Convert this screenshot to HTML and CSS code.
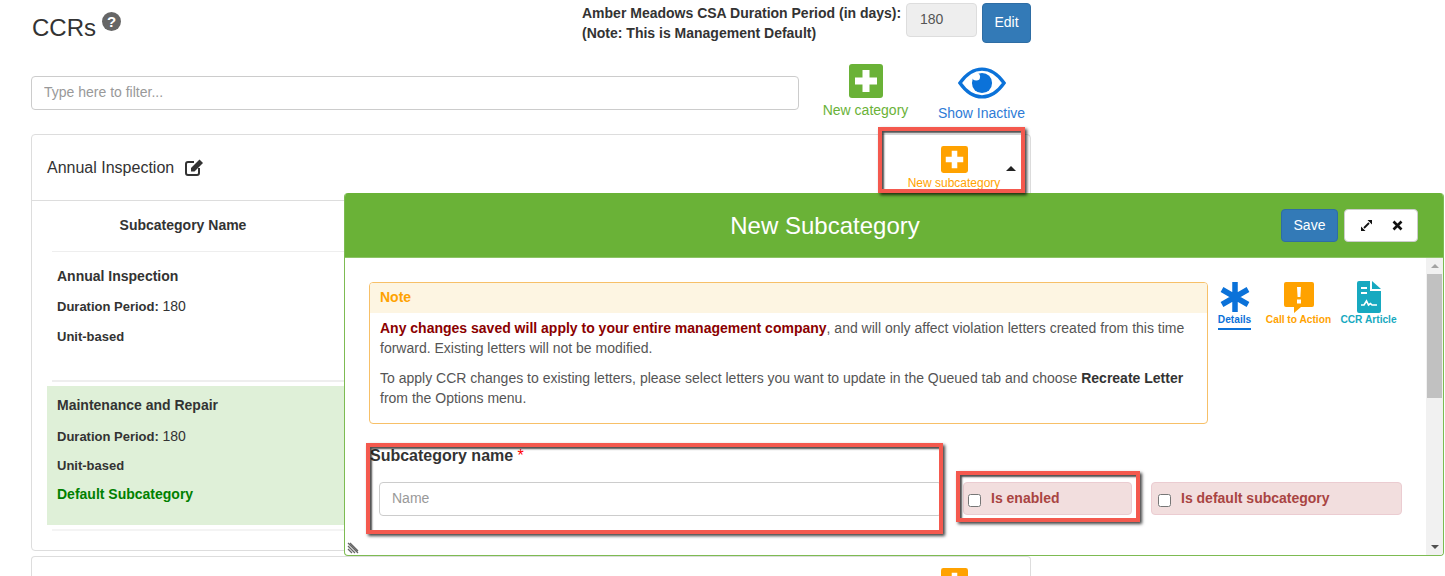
FILE: index.html
```html
<!DOCTYPE html>
<html>
<head>
    <title>CCRs</title>
    <link rel="stylesheet" href="styles.css">
</head>
<body>
    <div class="page">
        <div class="topRow">
            <div class="titleWrap">
                <h1>CCRs</h1>
                <span class="helpIcon">?</span>
            </div>
            <div class="duration">
                <div class="durationText">Amber Meadows CSA Duration Period (in days):<br>(Note: This is Management Default)</div>
                <input type="text" class="durationInput" value="180" disabled>
                <button class="btnBlue editBtn">Edit</button>
            </div>
        </div>

        <div class="filterRow">
            <input type="text" class="input filterInput" placeholder="Type here to filter...">
            <div class="action newCategory">
                <svg width="34" height="34" viewBox="0 0 34 34"><rect width="34" height="34" rx="3" fill="#6ab237"/><path d="M13.5 6h7v7.500h7.500v7h-7.500v7.500h-7v-7.500h-7.500v-7h7.500z" fill="#fff"/></svg>
                <span>New category</span>
            </div>
            <div class="action showInactive">
                <svg width="48" height="34" viewBox="0 0 50 34"><path d="M2 17C9 7 16 2.500 25 2.500S41 7 48 17C41 27 34 31.500 25 31.500S9 27 2 17z" fill="#fff" stroke="#0b72d9" stroke-width="3.500"/><circle cx="25" cy="17" r="10.500" fill="#0b72d9"/><circle cx="19" cy="10.500" r="4" fill="#fff"/></svg>
                <span>Show Inactive</span>
            </div>
        </div>

        <div class="panel">
            <div class="panelHead">
                <div class="panelTitle">
                    Annual Inspection
                    <svg class="editIcon" width="19" height="17" viewBox="0 0 19 17"><path d="M9 3H3a2 2 0 0 0-2 2v9a2 2 0 0 0 2 2h9a2 2 0 0 0 2-2V9" fill="none" stroke="#333" stroke-width="2"/><path d="M6 9l8.500-8.500 3.500 3.500-8.500 8.500H6z" fill="#333"/></svg>
                </div>
                <div class="action newSub">
                    <svg width="27" height="27" viewBox="0 0 34 34"><rect width="34" height="34" rx="3" fill="#ffa200"/><path d="M13.500 6h7v7.500h7.500v7h-7.500v7.500h-7v-7.500h-7.500v-7h7.500z" fill="#fff"/></svg>
                    <span>New subcategory</span>
                </div>
                <span class="caretUp"></span>
            </div>
            <div class="panelBody">
                <div class="tableHead"><span>Subcategory Name</span></div>
                <div class="sub">
                    <p class="subName">Annual Inspection</p>
                    <p><b>Duration Period:</b> <span class="num">180</span></p>
                    <p><b>Unit-based</b></p>
                </div>
                <div class="sub subDefault">
                    <p class="subName">Maintenance and Repair</p>
                    <p><b>Duration Period:</b> <span class="num">180</span></p>
                    <p><b>Unit-based</b></p>
                    <p class="defaultTag">Default Subcategory</p>
                </div>
                <div class="subEnd"></div>
            </div>
        </div>

        <div class="panel nextPanel">
            <div class="panelHead">
                <div class="action newSub">
                    <svg width="27" height="27" viewBox="0 0 34 34"><rect width="34" height="34" rx="3" fill="#ffa200"/><path d="M13.500 6h7v7.500h7.500v7h-7.500v7.500h-7v-7.500h-7.500v-7h7.500z" fill="#fff"/></svg>
                </div>
            </div>
        </div>
    </div>

    <div class="modal">
        <div class="modalHead">
            <h2>New Subcategory</h2>
            <button class="btnBlue saveBtn">Save</button>
            <div class="modalTools">
                <svg width="13" height="13" viewBox="0 0 13 13"><path d="M7.500 1H12v4.500zM5.500 12H1V7.500z" fill="#111"/><path d="M9 4L4 9" stroke="#111" stroke-width="1.800"/></svg>
                <svg width="11" height="11" viewBox="0 0 11 11"><path d="M1.500 1.500l8 8M9.500 1.500l-8 8" stroke="#111" stroke-width="2.600"/></svg>
            </div>
        </div>
        <div class="modalMain">
            <div class="modalBody">
                <div class="noteRow">
                    <div class="note">
                        <div class="noteHead">Note</div>
                        <div class="noteText">
                            <p><b class="warn">Any changes saved will apply to your entire management company</b>, and will only affect violation letters created from this time forward. Existing letters will not be modified.</p>
                            <p>To apply CCR changes to existing letters, please select letters you want to update in the Queued tab and choose <b>Recreate Letter</b> from the Options menu.</p>
                        </div>
                    </div>
                    <div class="tabs">
                        <div class="tab tabDetails">
                            <svg width="30" height="32" viewBox="0 0 30 32"><path d="M15 1v30M2 8.500l26 15M28 8.500l-26 15" stroke="#0b72d9" stroke-width="5.500"/></svg>
                            <span>Details</span>
                        </div>
                        <div class="tab tabAction">
                            <svg width="32" height="32" viewBox="0 0 32 32"><path d="M3 1h26a2 2 0 0 1 2 2v21a2 2 0 0 1-2 2H18l-7 6v-6H3a2 2 0 0 1-2-2V3a2 2 0 0 1 2-2z" fill="#ffa200"/><path d="M14 6h4l-.6 10h-2.800zM14 18.500h4v4h-4z" fill="#fff"/></svg>
                            <span>Call to Action</span>
                        </div>
                        <div class="tab tabArticle">
                            <svg width="24" height="32" viewBox="0 0 24 32"><path d="M2 0h11v10h11v20a2 2 0 0 1-2 2H2a2 2 0 0 1-2-2V2a2 2 0 0 1 2-2zM15 0l9 8h-9z" fill="#17a9c0"/><path d="M4 6h6v2H4zM4 11h6v2H4z" fill="#fff"/><path d="M4 24h3l2.500-4 2 4 2-1.500 1.500 1.500h5" fill="none" stroke="#fff" stroke-width="1.600"/></svg>
                            <span>CCR Article</span>
                        </div>
                    </div>
                </div>
                <div class="formRow">
                    <div class="nameCol">
                        <label class="nameLabel">Subcategory name <span class="req">*</span></label>
                        <input type="text" class="input nameInput" placeholder="Name">
                    </div>
                    <label class="checkBox enabledBox"><input type="checkbox"><span>Is enabled</span></label>
                    <label class="checkBox defaultBox"><input type="checkbox"><span>Is default subcategory</span></label>
                </div>
            </div>
            <div class="scrollBar">
                <span class="arrow arrowUp"></span>
                <div class="scrollThumb"></div>
                <span class="arrow arrowDown"></span>
            </div>
        </div>
        <svg class="resizer" width="12" height="12" viewBox="0 0 12 12"><path d="M1 1l10 10M1 4l7 7M1 7l4 4M3 1l8 8" stroke="#666" stroke-width="1.300"/></svg>
    </div>

    <div class="mark markSub"></div>
    <div class="mark markName"></div>
    <div class="mark markEnabled"></div>
</body>
</html>
```

FILE: styles.css
```css
html, body {
    height: 576px;
    overflow: hidden;
}

body {
    margin: 0;
    position: relative;
    background-color: white;
    color: #333;
    font-family: "Liberation Sans", Arial, sans-serif;
    font-size: 14px;
    line-height: 20px;
}

p {
    margin: 0 0 10px;
}

.page {
    width: 1000px;
    margin-left: 31px;
}

.topRow {
    height: 64px;
    display: flex;
    justify-content: space-between;
}

.titleWrap {
    display: flex;
    align-items: flex-start;
    padding-left: 1px;
}

h1 {
    margin: 15px 0 0;
    font-size: 24px;
    font-weight: normal;
    line-height: 26px;
}

.helpIcon {
    width: 19px;
    height: 19px;
    margin: 12px 0 0 6px;
    border-radius: 50%;
    background-color: #666;
    color: white;
    font-size: 15px;
    font-weight: bold;
    line-height: 19px;
    text-align: center;
}

.duration {
    width: 449px;
    display: flex;
    align-items: flex-start;
    padding-top: 3px;
}

.durationText {
    width: 324px;
    font-weight: bold;
    white-space: nowrap;
}

.durationInput {
    width: 71px;
    height: 34px;
    box-sizing: border-box;
    padding: 0 13px 2px;
    margin-right: 5px;
    border: 1px solid #ddd;
    border-radius: 4px;
    background-color: #eee;
    color: #555;
    font: 14px "Liberation Sans", Arial, sans-serif;
}

.btnBlue {
    border: 1px solid #2e6da4;
    border-radius: 4px;
    background-color: #337ab7;
    color: white;
    font: 14px "Liberation Sans", Arial, sans-serif;
}

.editBtn {
    width: 49px;
    height: 40px;
    padding-bottom: 3px;
}

.input {
    box-sizing: border-box;
    height: 34px;
    padding: 0 12px 2px;
    border: 1px solid #ccc;
    border-radius: 4px;
    font: 14px "Liberation Sans", Arial, sans-serif;
}

.input::placeholder {
    color: #999;
}

.filterRow {
    height: 70px;
    display: flex;
    align-items: flex-start;
}

.filterInput {
    width: 768px;
    margin-top: 12px;
}

.action {
    display: flex;
    flex-direction: column;
    align-items: center;
}

.action span {
    white-space: nowrap;
}

.newCategory {
    width: 85px;
    margin-left: 24px;
    color: #6ab237;
}

.newCategory span {
    margin-top: 2px;
}

.showInactive {
    width: 87px;
    margin-left: 30px;
    padding-top: 2px;
    color: #2e7bd6;
}

.showInactive span {
    margin-top: 3px;
}

.panel {
    box-sizing: border-box;
    height: 417px;
    border: 1px solid #ddd;
    border-radius: 4px;
}

.panelHead {
    position: relative;
    height: 65px;
    box-sizing: content-box;
    border-bottom: 1px solid #ddd;
    display: flex;
    justify-content: space-between;
    align-items: center;
    padding: 0 15px;
}

.panelTitle {
    font-size: 16px;
    display: flex;
    align-items: center;
}

.editIcon {
    margin-left: 11px;
}

.newSub {
    width: 100px;
    align-self: flex-start;
    margin: 11px 11px 0 auto;
    color: #ffa200;
    font-size: 12px;
    line-height: 14px;
}

.newSub span {
    margin-top: 3px;
}

.caretUp {
    position: absolute;
    left: 974px;
    top: 31px;
    border-left: 5px solid transparent;
    border-right: 5px solid transparent;
    border-bottom: 5px solid #222;
}

.panelBody {
    padding: 0 15px;
}

.tableHead {
    height: 50px;
    margin-left: 5px;
    line-height: 49px;
    font-weight: bold;
    border-bottom: 1px solid #eee;
}

.tableHead span {
    display: block;
    width: 262px;
    text-align: center;
}

.sub {
    height: 128px;
    box-sizing: border-box;
    padding: 14px 10px 0;
    font-size: 13px;
}

.subName {
    font-size: 14px;
    font-weight: bold;
}

.num {
    font-size: 14px;
}

.subDefault {
    height: 139px;
    margin-top: 6px;
    padding-top: 9px;
    background-color: #dff0d8;
    position: relative;
}

.subDefault::before {
    content: "";
    position: absolute;
    left: 5px;
    right: 0;
    top: -6px;
    border-top: 2px solid #eee;
}

.subDefault p {
    margin-bottom: 9px;
}

.subDefault .subName {
    margin-bottom: 11px;
}

.subDefault .defaultTag {
    margin-top: -1px;
    font-size: 14px;
    font-weight: bold;
    color: green;
}

.subEnd {
    margin: 4px 0 0 5px;
    border-top: 2px solid #f4f4f4;
}

.nextPanel {
    height: 20px;
    margin-top: 5px;
    border-bottom: none;
    border-radius: 4px 4px 0 0;
    overflow: hidden;
}

.nextPanel .panelHead {
    border-bottom: none;
}

.modal {
    position: absolute;
    left: 344px;
    top: 193px;
    box-sizing: border-box;
    width: 1100px;
    height: 363px;
    border: 1px solid #7dbb52;
    border-top: none;
    border-radius: 4px;
    background-color: white;
    overflow: hidden;
}

.modalHead {
    height: 65px;
    margin: 0 -1px;
    display: flex;
    align-items: center;
    justify-content: flex-end;
    position: relative;
    background-color: #6ab237;
    border-bottom: 1px solid #8cc466;
    box-sizing: border-box;
}

.modalHead h2 {
    position: absolute;
    left: 0;
    top: 23px;
    width: 962px;
    margin: 0;
    color: white;
    font-size: 24px;
    font-weight: normal;
    text-align: center;
}

.saveBtn {
    width: 57px;
    height: 33px;
    margin-right: 6px;
}

.modalTools {
    width: 74px;
    height: 33px;
    margin-right: 26px;
    box-sizing: border-box;
    padding: 0 14px 0 15px;
    display: flex;
    align-items: center;
    justify-content: space-between;
    background-color: white;
    border: 1px solid #ccc;
    border-radius: 4px;
}

.modalMain {
    height: 297px;
    display: flex;
}

.modalBody {
    width: 1082px;
    box-sizing: border-box;
    padding: 24px 0 0 24px;
}

.noteRow {
    display: flex;
    align-items: flex-start;
}

.note {
    width: 839px;
    height: 142px;
    box-sizing: border-box;
    border: 1px solid #f7c068;
    border-radius: 4px;
    overflow: hidden;
}

.noteHead {
    height: 30px;
    padding-left: 10px;
    background-color: #fdf5e2;
    color: #ffa200;
    font-weight: bold;
    line-height: 29px;
}

.noteText {
    padding: 5px 10px 0;
    color: #555;
}

.noteText b {
    color: #333;
}

.noteText .warn {
    color: #8b0000;
}

.tabs {
    display: flex;
    margin: -1px 0 0 10px;
    font-size: 10.200px;
    line-height: 14px;
    font-weight: bold;
}

.tab {
    display: flex;
    flex-direction: column;
    align-items: center;
    white-space: nowrap;
}

.tabDetails {
    color: #0b72d9;
    width: 33px;
}

.tabDetails span {
    padding-bottom: 1px;
    border-bottom: 2px solid #0b72d9;
}

.tabAction {
    color: #ffa200;
    width: 65px;
    margin-left: 15px;
}

.tabArticle {
    color: #17a9c0;
    width: 55px;
    margin-left: 10px;
}

.formRow {
    display: flex;
    align-items: flex-start;
    margin-top: 22px;
}

.nameCol {
    width: 594px;
    flex-shrink: 0;
}

.nameLabel {
    display: block;
    margin-left: 1px;
    font-size: 16px;
    font-weight: bold;
    line-height: 20px;
}

.req {
    color: red;
    font-weight: normal;
}

.nameInput {
    display: block;
    width: 563px;
    margin: 16px 0 0 10px;
}

.checkBox {
    box-sizing: border-box;
    height: 33px;
    margin-top: 36px;
    padding-bottom: 2px;
    display: flex;
    align-items: center;
    border: 1px solid #ebccd1;
    border-radius: 4px;
    background-color: #f2dede;
    color: #a94442;
    font-weight: bold;
}

.checkBox input {
    width: 13px;
    height: 13px;
    margin: 5px 10px 0 4px;
}

.enabledBox {
    width: 169px;
}

.defaultBox {
    width: 251px;
    margin-left: 19px;
}

.defaultBox input {
    margin-left: 6px;
}

.scrollBar {
    width: 17px;
    background-color: #f1f1f1;
    display: flex;
    flex-direction: column;
    align-items: center;
}

.arrow {
    width: 0;
    height: 0;
    border-left: 4px solid transparent;
    border-right: 4px solid transparent;
    margin: 6px 0;
}

.arrowUp {
    border-bottom: 4px solid #a3a3a3;
}

.arrowDown {
    border-top: 4px solid #505050;
    margin-top: auto;
}

.scrollThumb {
    width: 15px;
    height: 124px;
    background-color: #c1c1c1;
}

.resizer {
    position: absolute;
    left: 2px;
    bottom: 1px;
}

/* red highlight boxes drawn over the screenshot */
.mark {
    position: absolute;
    box-sizing: border-box;
    border: 4px solid #f4594e;
    box-shadow: 2px 2px 3px rgba(0, 0, 0, 0.75), inset 2px 2px 2px rgba(0, 0, 0, 0.7);
}

.markSub {
    left: 878px;
    top: 127px;
    width: 147px;
    height: 66px;
}

.markName {
    left: 366px;
    top: 443px;
    width: 577px;
    height: 91px;
}

.markEnabled {
    left: 956px;
    top: 471px;
    width: 184px;
    height: 51px;
}
```
